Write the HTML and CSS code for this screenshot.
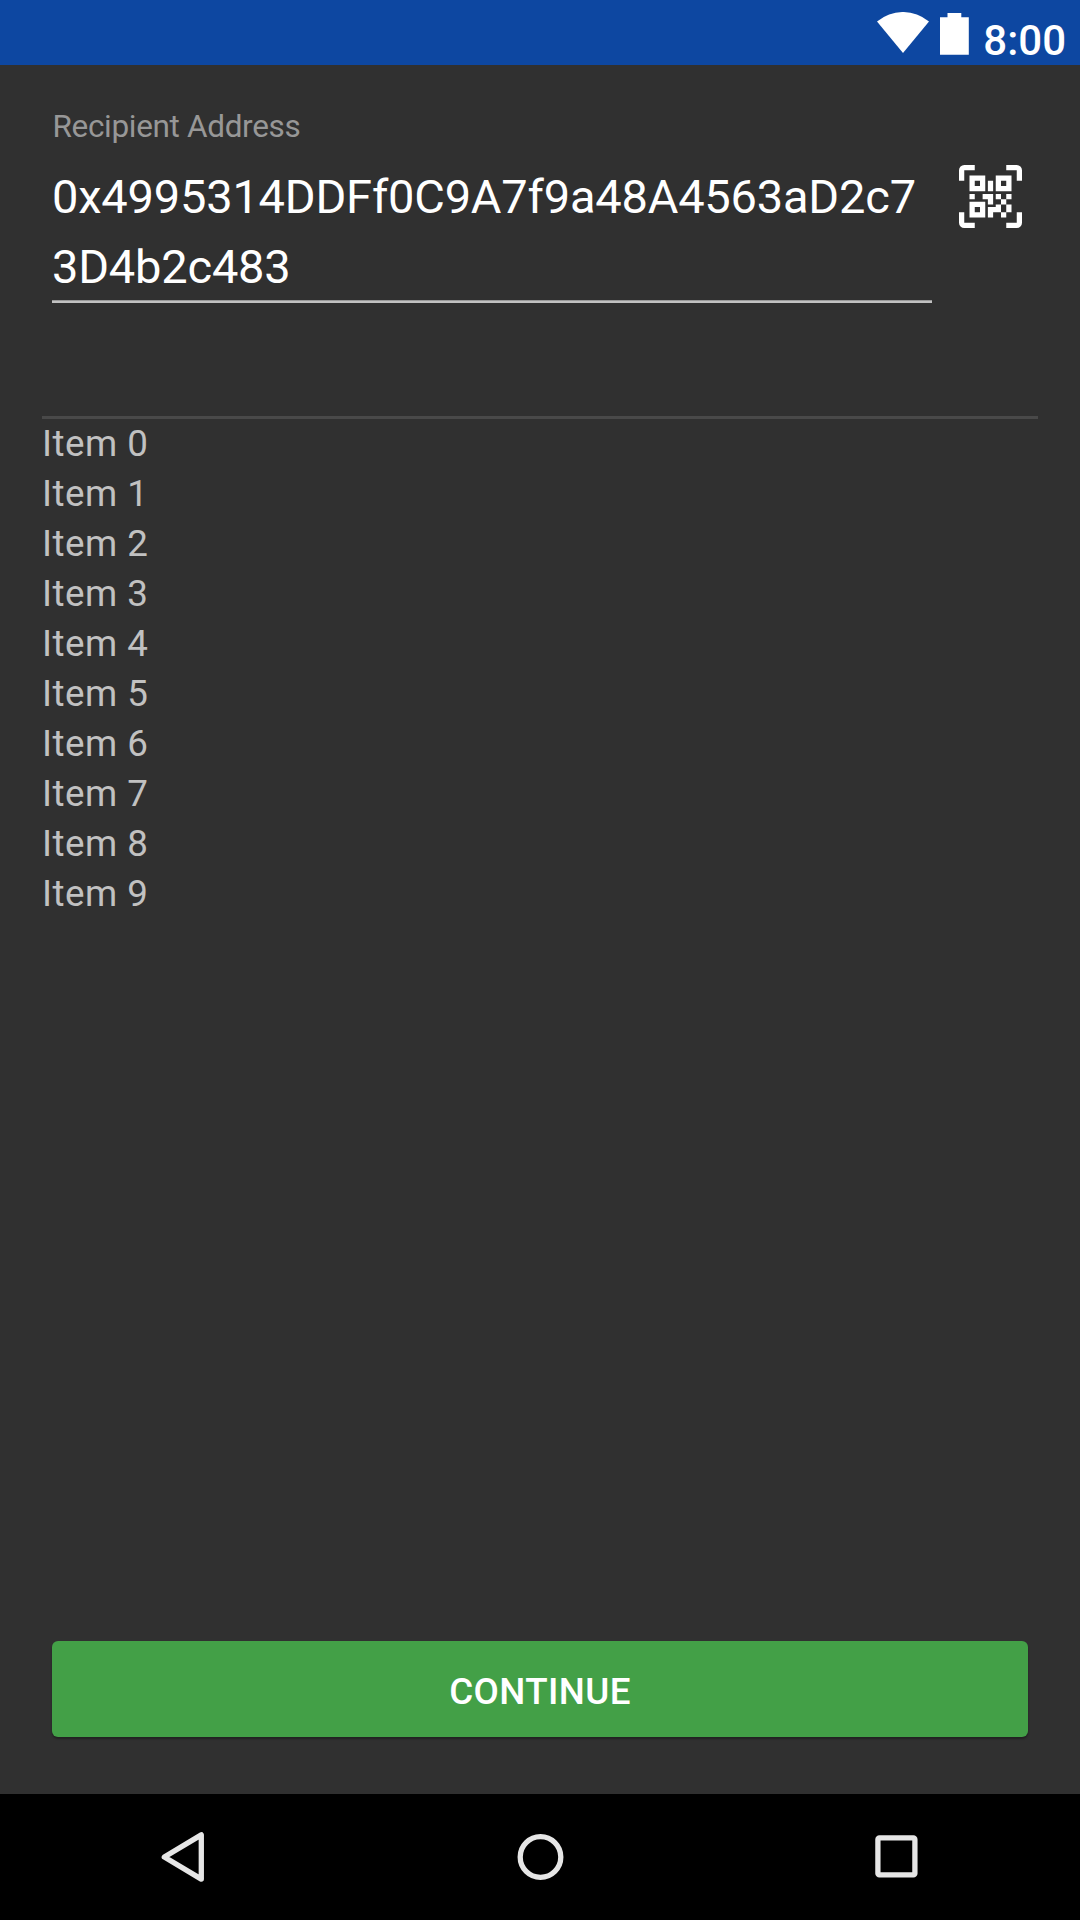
FILE: index.html
```html
<!DOCTYPE html>
<html lang="en">
<head>
<meta charset="utf-8">
<title>Recipient</title>
<link rel="stylesheet" href="styles.css">
</head>
<body>
<div class="screen">
  <header class="status-bar">
    <svg class="wifi" viewBox="0 0 52 41"><path d="M0 9.5A40.3 40.3 0 0 1 52 9.5L26 41Z"/></svg>
    <svg class="battery" viewBox="0 0 29 42"><path d="M7.5 0H21.3V4.2H28.8V41.7H0V4.2H7.5Z"/></svg>
    <span class="clock">8:00</span>
  </header>
  <main class="content">
    <section class="recipient">
      <div class="field">
        <label class="field-label">Recipient Address</label>
        <div class="field-value">0x4995314DDFf0C9A7f9a48A4563aD2c73D4b2c483</div>
      </div>
      <svg class="scan" viewBox="0 0 24 24"><path d="M4,4H10V10H4V4M20,4V10H14V4H20M14,15H16V13H14V11H16V13H18V11H20V13H18V15H20V18H18V20H16V18H13V20H11V16H14V15M16,15V18H18V15H16M4,20V14H10V20H4M6,6V8H8V6H6M16,6V8H18V6H16M6,16V18H8V16H6M4,11H6V13H4V11M9,11H13V15H11V13H9V11M11,6H13V10H11V6M2,2V6H0V2A2,2 0 0,1 2,0H6V2H2M22,0A2,2 0 0,1 24,2V6H22V2H18V0H22M2,18V22H6V24H2A2,2 0 0,1 0,22V18H2M22,22V18H24V22A2,2 0 0,1 22,24H18V22H22Z"/></svg>
    </section>
    <ul class="items">
      <li>Item 0</li>
      <li>Item 1</li>
      <li>Item 2</li>
      <li>Item 3</li>
      <li>Item 4</li>
      <li>Item 5</li>
      <li>Item 6</li>
      <li>Item 7</li>
      <li>Item 8</li>
      <li>Item 9</li>
    </ul>
    <button class="continue">CONTINUE</button>
  </main>
  <nav class="nav-bar">
    <svg class="nav-icon" viewBox="0 0 60 60"><path d="M39.3 7.9V52.1L2.3 30Z" transform="translate(9)"/></svg>
    <svg class="nav-icon" viewBox="0 0 60 60"><circle cx="30.5" cy="30" r="20.3"/></svg>
    <svg class="nav-icon" viewBox="0 0 60 60"><rect x="11.9" y="10.9" width="37" height="37" rx="1.5"/></svg>
  </nav>
</div>
</body>
</html>
```
FILE: styles.css
```css
* {
  box-sizing: border-box;
}

body {
  margin: 0;
  background: #303030;
  font-family: Roboto, sans-serif;
}

.screen {
  display: flex;
  flex-direction: column;
  width: 1080px;
  height: 1920px;
}

.status-bar {
  display: flex;
  justify-content: flex-end;
  align-items: flex-start;
  height: 65px;
  padding: 12px 14px 0 0;
  background: #0d47a1;
  color: #fff;
}

.status-bar svg {
  fill: #fff;
}

.wifi {
  width: 52px;
  height: 41px;
  margin-right: 11px;
}

.battery {
  width: 29px;
  height: 42px;
  margin: 0.7px 14px 0 0;
}

.clock {
  padding-top: 4px;
  font-size: 42px;
  font-weight: 500;
  line-height: 50px;
}

.content {
  display: flex;
  flex: 1;
  flex-direction: column;
  padding: 42px 42px 57px;
}

.recipient {
  display: flex;
  align-items: flex-start;
  height: 309px;
  padding: 0 16px 0 10px;
}

.field {
  width: 880px;
  margin-right: 27px;
}

.field-label {
  display: block;
  height: 55px;
  padding-left: 0.5px;
  font-size: 31.5px;
  line-height: 40px;
  letter-spacing: -0.33px;
  color: #979797;
}

.field-value {
  height: 141px;
  border-bottom: 2px solid #c1c1c1;
  box-shadow: inset 0 -1px #989898;
  font-size: 47px;
  line-height: 70px;
  letter-spacing: -0.2px;
  word-break: break-all;
  color: #fff;
}

.scan {
  width: 63px;
  height: 63px;
  margin-top: 58px;
  fill: #fff;
}

.items {
  flex: 1;
  margin: 0;
  padding: 0;
  border-top: 3px solid #494949;
  list-style: none;
  font-size: 36.75px;
  line-height: 50px;
  letter-spacing: 0.5px;
  color: #c1c1c1;
}

.continue {
  height: 96px;
  margin: 0 10px;
  padding: 6px 0 0;
  border: 0;
  border-radius: 6px;
  background: #43a047;
  box-shadow: 0 2px 2px rgba(0, 0, 0, 0.3);
  color: #fff;
  font: 500 36.75px/42px Roboto, sans-serif;
  letter-spacing: 0.4px;
}

.nav-bar {
  display: flex;
  justify-content: space-between;
  align-items: center;
  height: 126px;
  padding: 0 154px 0 153px;
  background: #000;
}

.nav-icon {
  width: 60px;
  height: 60px;
  fill: none;
  stroke: #e6e6e6;
  stroke-width: 5.3;
  stroke-linejoin: round;
}
```
